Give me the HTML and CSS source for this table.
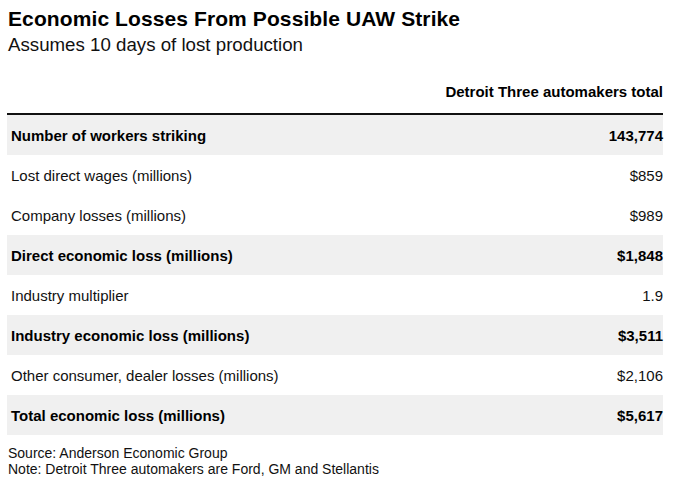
FILE: index.html
```html
<!DOCTYPE html>
<html>
<head>
<meta charset="utf-8">
<link rel="stylesheet" href="styles.css">
</head>
<body>
<div class="chart">
  <h1 class="title">Economic Losses From Possible UAW Strike</h1>
  <div class="subtitle">Assumes 10 days of lost production</div>
  <div class="table">
    <div class="head"><span>Detroit Three automakers total</span></div>
    <div class="row shade bold"><span>Number of workers striking</span><span>143,774</span></div>
    <div class="row"><span>Lost direct wages (millions)</span><span>$859</span></div>
    <div class="row"><span>Company losses (millions)</span><span>$989</span></div>
    <div class="row shade bold"><span>Direct economic loss (millions)</span><span>$1,848</span></div>
    <div class="row"><span>Industry multiplier</span><span>1.9</span></div>
    <div class="row shade bold"><span>Industry economic loss (millions)</span><span>$3,511</span></div>
    <div class="row"><span>Other consumer, dealer losses (millions)</span><span>$2,106</span></div>
    <div class="row shade bold"><span>Total economic loss (millions)</span><span>$5,617</span></div>
  </div>
  <div class="notes">
    <div>Source: Anderson Economic Group</div>
    <div>Note: Detroit Three automakers are Ford, GM and Stellantis</div>
  </div>
</div>
</body>
</html>
```
FILE: styles.css
```css
html, body {
  margin: 0;
  padding: 0;
  background: #ffffff;
}
body {
  font-family: "Liberation Sans", Arial, sans-serif;
  color: #000;
}
.chart {
  width: 656px;
  padding: 6px 0 0 7px;
}
.title {
  margin: 0 0 0 1px;
  font-size: 21px;
  font-weight: bold;
  line-height: 26px;
  letter-spacing: 0.1px;
}
.subtitle {
  margin: 2px 0 0 1px;
  font-size: 18.7px;
  line-height: 22px;
  color: #111;
}
.table {
  margin-top: 27px;
}
.head {
  display: flex;
  justify-content: flex-end;
  font-size: 15px;
  font-weight: bold;
  line-height: 18px;
  padding-bottom: 12px;
  border-bottom: 2px solid #111;
}
.row {
  display: flex;
  justify-content: space-between;
  align-items: center;
  height: 40px;
  padding: 0 0 0 4px;
  font-size: 15px;
  color: #111;
}
.row.shade {
  background: #f0f0f0;
}
.row.bold {
  font-weight: bold;
  color: #000;
}
.notes {
  margin: 10px 0 0 1px;
  font-size: 14px;
  line-height: 16px;
  color: #111;
}
```
